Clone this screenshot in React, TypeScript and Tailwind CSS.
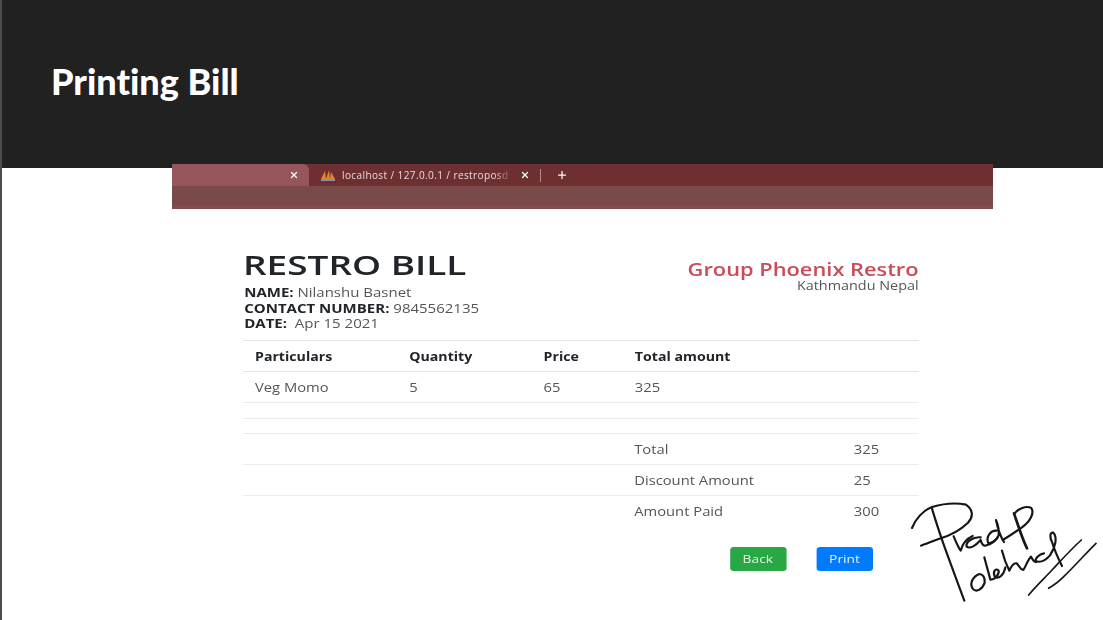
import React from 'react';
import { Plus, X } from 'lucide-react';

const sans = { fontFamily: '"Open Sans", "Noto Sans", sans-serif' };

const Signature = () => (
  <svg
    className="absolute left-[880px] top-[480px] blur-[0.3px]"
    width="223"
    height="140"
    viewBox="0 0 669 420"
    fill="none"
    stroke="#161616"
    strokeWidth="6.5"
    strokeLinecap="round"
    strokeLinejoin="round"
  >
    {/* P */}
    <path d="M90 144C100 118 122 92 150 81C180 72 222 68 252 74C272 88 276 108 258 128C235 150 200 168 172 176C150 184 132 192 117 197" />
    <path d="M150 86C160 120 170 150 183 188C205 250 228 310 247 362" />
    {/* r a d */}
    <path d="M215 169C222 186 230 204 236 212C240 196 250 178 272 168" />
    <path d="M296 172C272 170 250 186 254 200C264 208 282 196 296 180C298 190 304 200 314 196C330 190 344 178 348 170" />
    <path d="M344 152C326 150 312 170 318 188C326 194 344 180 350 166C352 150 346 130 342 120C346 140 356 170 366 186" />
    {/* y */}
    <path d="M396 100C408 135 420 175 435 205" strokeWidth="8" />
    <path d="M398 100C408 86 432 76 448 84C458 100 444 125 420 142C400 156 380 170 362 180" />
    {/* o */}
    <path d="M292 282C272 290 262 310 272 326C284 340 302 326 308 308C310 292 302 282 292 282" />
    {/* b e h m */}
    <path d="M307 232C313 256 320 278 325 299C338 300 352 284 350 272C340 262 332 276 338 290C350 300 366 284 370 262" />
    <path d="M360 212C366 236 374 256 382 272C388 258 396 248 404 250C412 256 412 268 424 270C432 258 438 238 447 230C452 238 454 246 462 246" />
    {/* e l */}
    <path d="M462 244C476 248 492 240 504 226C522 200 526 170 514 158C504 156 502 170 510 186C518 212 530 238 540 258" />
    <path d="M462 246C456 236 472 222 486 220" />
    {/* underlines */}
    <path d="M440 345C462 318 488 294 510 270C540 238 570 205 598 180" strokeWidth="5" />
    <path d="M500 325C518 314 532 304 545 290C578 258 610 222 642 190" strokeWidth="5" />
  </svg>
);

// Screenshot inside the slide was stretched horizontally, hence scale-x on the content.
const Row = ({ a, b, className = 'h-[31px]' }: { a?: string; b?: string; className?: string }) => (
  <div className={`flex items-center border-b border-[#ececec] pt-[2px] text-[12.3px] text-[#555] ${className}`}>
    <div className="w-[326px]" />
    <div className="w-[183px]">{a}</div>
    <div>{b}</div>
  </div>
);

export default function App() {
  return (
    <div className="relative h-[620px] w-[1103px] overflow-hidden border-l-2 border-[#4a4d50] bg-white" style={sans}>
      <div className="flex h-[168px] items-start bg-[#212121] pl-[49px] pt-[57px]">
        <h1
          className="text-[36px] font-black leading-[48px] text-white [font-variant-ligatures:none]"
          style={{ fontFamily: 'Lato, sans-serif' }}
        >
          Printing Bill
        </h1>
      </div>

      <div className="ml-[170px] -mt-1 w-[821px]">
        <div className="flex h-[22px] items-center bg-[#6e2f30] text-[10px] font-medium tracking-[0.4px] text-[#e8dcdc]">
          <div className="flex h-full w-[137px] items-center justify-end rounded-tr-md bg-[#95555a] pr-[10px] text-white">
            <X size={10} strokeWidth={3} />
          </div>
          <svg className="ml-[11px]" width="16" height="12" viewBox="0 0 16 12">
            <path d="M1 10L5 2L6 10zM6 10L9 1L10 10zM10 10L11 3L15 10z" fill="#e0862a" />
            <rect x="1" y="10" width="14" height="2" fill="#8a8fb0" />
          </svg>
          <span className="ml-[6px] w-[170px] overflow-hidden whitespace-nowrap [mask-image:linear-gradient(to_right,black_90%,transparent)]">
            localhost / 127.0.0.1 / restroposd
          </span>
          <X className="ml-[8px] text-white" size={10} strokeWidth={3} />
          <span className="ml-[10px] h-[13px] w-px bg-[#b08a8a]" />
          <Plus className="ml-[15px] text-white" size={12} strokeWidth={2.5} />
        </div>
        <div className="h-[23px] border-b-[4px] border-[#854a4c] bg-[#7a4a4b]" />
      </div>

      <div className="ml-[241px] w-[563px] origin-left scale-x-[1.2]">
        <div className="flex h-[131px] items-start justify-between">
          <div className="pt-[39px]">
            <div className="origin-left scale-x-[1.14] text-[27px] font-semibold leading-[34px] text-[#212529]">RESTRO BILL</div>
            <div className="mt-[3px] pl-px text-[12.5px] leading-[15.5px] text-[#555]">
              <div><b className="text-[#212529]">NAME:</b> Nilanshu Basnet</div>
              <div><b className="text-[#212529]">CONTACT NUMBER:</b> 9845562135</div>
              <div><b className="text-[#212529]">DATE:</b>&nbsp; Apr 15 2021</div>
            </div>
          </div>
          <div className="pt-[50px] text-right">
            <div className="text-[18.2px] font-semibold leading-[20px] text-[#c94c58]">Group Phoenix Restro</div>
            <div className="text-[12px] leading-[13px] text-[#555]">Kathmandu Nepal</div>
          </div>
        </div>

        <div className="flex h-[32px] items-center border-y border-[#e4e4e4] pl-[10px] pt-[2px] text-[11.8px] font-bold text-[#212529]">
          <div className="w-[128.5px]">Particulars</div>
          <div className="w-[112px]">Quantity</div>
          <div className="w-[76px]">Price</div>
          <div>Total amount</div>
        </div>
        <div className="flex h-[31px] items-center border-b border-[#ececec] pl-[10px] pt-[2px] text-[12.3px] text-[#555]">
          <div className="w-[128.5px]">Veg Momo</div>
          <div className="w-[112px]">5</div>
          <div className="w-[76px]">65</div>
          <div>325</div>
        </div>
        <Row className="h-[15.5px]" />
        <Row className="h-[15.5px]" />
        <Row a="Total" b="325" />
        <Row a="Discount Amount" b="25" />
        <div className="flex h-[31px] items-center pt-[2px] text-[12.3px] text-[#555]">
          <div className="w-[326px]" />
          <div className="w-[183px]">Amount Paid</div>
          <div>300</div>
        </div>

        <div className="mt-[20px] flex justify-end gap-[25px] pr-[38px]">
          <button className="h-[24px] w-[47px] rounded-[3px] bg-[#28a745] text-[11.5px] text-[#e8f5ea]">Back</button>
          <button className="h-[24px] w-[47.5px] rounded-[3px] bg-[#007bff] text-[11.5px] text-[#e6f1ff]">Print</button>
        </div>
      </div>

      <Signature />
    </div>
  );
}
